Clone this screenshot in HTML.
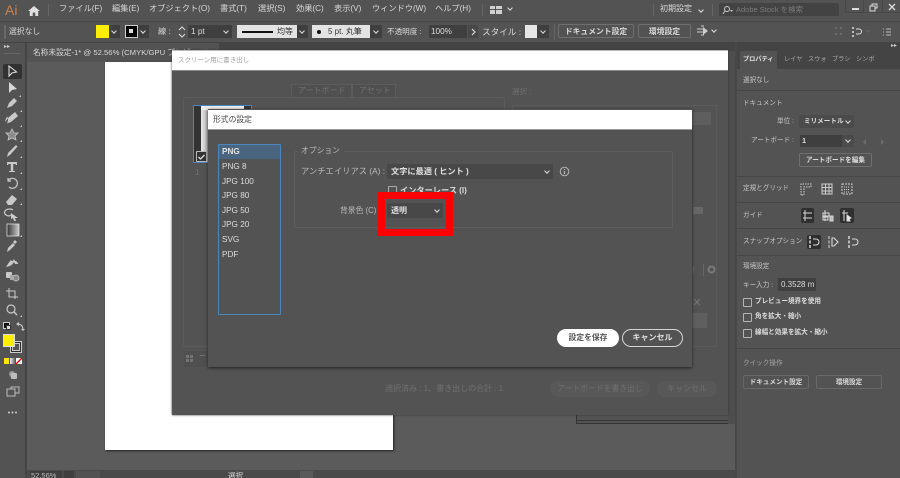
<!DOCTYPE html>
<html lang="ja"><head><meta charset="utf-8"><title>Illustrator</title>
<style>
html,body{margin:0;padding:0;background:#5a5a5a}
#p{position:relative;width:900px;height:478px;overflow:hidden;background:#5b5b5b;font-family:"Liberation Sans","Noto Sans CJK JP",sans-serif;font-size:8.2px;color:#d8d8d8;filter:blur(.35px)}
#p div{position:absolute;box-sizing:border-box}
.t{position:absolute;white-space:nowrap;line-height:12px}
.b{background:#3f3f3f}
.btn{border:1px solid #6e6e6e;border-radius:2px;text-align:center;font-weight:bold;color:#d8d8d8;line-height:13px;white-space:nowrap;overflow:hidden}
.c::after{content:"";position:absolute;right:4px;top:50%;width:3px;height:3px;margin-top:-3px;border-right:1.3px solid #ddd;border-bottom:1.3px solid #ddd;transform:rotate(45deg)}
svg{position:absolute;overflow:visible}
.dim{color:#707070}
.cb{width:9px;height:9px;border:1px solid #b5b5b5;border-radius:1px}
.sep{height:1px;background:#464646}
.r{font-size:6.6px;color:#c8c8c8}
.rb{font-size:6.6px;font-weight:bold;color:#dcdcdc}
.l{font-size:8.200px;color:#ddd}
</style></head><body><div id="p">

<!-- menu bar -->
<div style="left:0;top:0;width:900px;height:21px;background:#535353"></div>
<div class="t" style="left:5px;top:2px;font-size:14px;line-height:16px;color:#c9824f">Ai</div>
<svg style="left:28px;top:6px" width="12" height="10" viewBox="0 0 14 12"><path d="M7 0L0 6h2v6h3.500V8h3v4H12V6h2z" fill="#e0e0e0"/></svg>
<div style="left:48px;top:4px;width:1px;height:12px;background:#666"></div>
<div class="t" style="left:59px;top:3px;">ファイル(F)</div>
<div class="t" style="left:112px;top:3px">編集(E)</div>
<div class="t" style="left:149px;top:3px">オブジェクト(O)</div>
<div class="t" style="left:220px;top:3px">書式(T)</div>
<div class="t" style="left:258px;top:3px">選択(S)</div>
<div class="t" style="left:296px;top:3px">効果(C)</div>
<div class="t" style="left:334px;top:3px">表示(V)</div>
<div class="t" style="left:372px;top:3px">ウィンドウ(W)</div>
<div class="t" style="left:435px;top:3px">ヘルプ(H)</div>
<div style="left:482px;top:4px;width:1px;height:12px;background:#666"></div>
<div style="left:490px;top:6px;width:12px;height:8px;background:#d0d0d0"></div>
<div style="left:495px;top:6px;width:1px;height:8px;background:#535353"></div>
<div style="left:490px;top:9px;width:12px;height:1px;background:#535353"></div>
<div class="c" style="left:504px;top:3px;width:12px;height:12px"></div>
<div style="left:653px;top:4px;width:1px;height:12px;background:#666"></div>
<div class="t" style="left:660px;top:3px;font-size:8px">初期設定</div>
<div class="c" style="left:695px;top:5px;width:12px;height:12px"></div>
<div style="left:712px;top:4px;width:1px;height:12px;background:#666"></div>
<div style="left:719px;top:3px;width:120px;height:13px;background:#434343;border-radius:2px"></div>
<svg style="left:722px;top:5px" width="12" height="10"><circle cx="5" cy="4" r="2.500" fill="none" stroke="#ccc"/><path d="M3 6L1 9" stroke="#ccc" fill="none"/><path d="M8 5h3l-1.500 2z" fill="#ccc"/></svg>
<div class="t" style="left:736px;top:4px;font-size:7.500px;color:#7c7c7c">Adobe Stock を検索</div>
<div style="left:845px;top:0;width:55px;height:13px;border-left:1px solid #484848;border-bottom:1px solid #484848"></div>
<div style="left:863px;top:0;width:1px;height:13px;background:#484848"></div>
<div style="left:882px;top:0;width:1px;height:13px;background:#484848"></div>
<div style="left:852px;top:8px;width:7px;height:1.500px;background:#ddd"></div>
<svg style="left:869px;top:3px" width="10" height="10"><path d="M3 3V1h5v4H6M1 3h5v5H1z" fill="none" stroke="#ddd"/></svg>
<svg style="left:888px;top:3px" width="8" height="8"><path d="M1 1l6 6M7 1L1 7" stroke="#ddd" stroke-width="1.300"/></svg>

<!-- control bar -->
<div style="left:0;top:21px;width:900px;height:21px;background:#535353;border-top:1px solid #484848"></div>
<div style="left:4px;top:25px;width:2px;height:14px;background:#666"></div>
<div class="t" style="left:9px;top:26px;font-size:7.800px">選択なし</div>
<div class="b c" style="left:96px;top:25px;width:24px;height:13px"></div>
<div style="left:96px;top:25px;width:13px;height:13px;background:#ffee00"></div>
<div class="b c" style="left:125px;top:25px;width:24px;height:13px"></div>
<div style="left:125px;top:25px;width:13px;height:13px;background:#000;border:1px solid #ccc"></div>
<div style="left:129px;top:29px;width:4px;height:4px;background:#ddd"></div>
<div class="t" style="left:158px;top:26px">線 :</div>
<svg style="left:178px;top:26px" width="8" height="12"><path d="M1 4l3-3 3 3M1 8l3 3 3-3" fill="none" stroke="#ddd"/></svg>
<div class="b" style="left:188px;top:25px;width:32px;height:13px;padding-left:3px;line-height:13px;color:#ddd">1 pt</div>
<div class="b c" style="left:220px;top:25px;width:12px;height:13px"></div>
<div style="left:237px;top:25px;width:60px;height:13px;background:#e3e3e3"></div>
<div style="left:242px;top:31px;width:31px;height:1.500px;background:#111"></div>
<div class="t" style="left:277px;top:26px;color:#333;font-size:8px">均等</div>
<div class="b c" style="left:297px;top:25px;width:11px;height:13px"></div>
<div style="left:312px;top:25px;width:58px;height:13px;background:#e3e3e3"></div>
<div style="left:317px;top:30px;width:4px;height:4px;border-radius:50%;background:#111"></div>
<div class="t" style="left:328px;top:26px;color:#333;font-size:8px">5 pt. 丸筆</div>
<div class="b c" style="left:370px;top:25px;width:12px;height:13px"></div>
<div class="t" style="left:387px;top:26px;font-size:7.600px">不透明度 :</div>
<div class="b" style="left:429px;top:25px;width:38px;height:13px;padding-left:2px;line-height:13px;color:#ddd">100%</div>
<div style="left:468px;top:25px;width:10px;height:13px;background:#484848"></div>
<svg style="left:470px;top:28px" width="8" height="8"><path d="M2 1l3 3-3 3" fill="none" stroke="#ddd" stroke-width="1.200"/></svg>
<div class="t" style="left:482px;top:26px;font-size:8.600px">スタイル :</div>
<div style="left:525px;top:25px;width:12px;height:13px;background:#e6e6e6"></div>
<div class="b c" style="left:537px;top:25px;width:12px;height:13px"></div>
<div style="left:554px;top:24px;width:1px;height:16px;background:#666"></div>
<div class="btn" style="left:558px;top:24px;width:76px;height:14px;font-size:7.800px">ドキュメント設定</div>
<div class="btn" style="left:638px;top:24px;width:53px;height:14px;font-size:7.800px">環境設定</div>
<svg style="left:697px;top:25px" width="12" height="12"><path d="M0 4h6M0 7h6M4 1h3M4 10h3" stroke="#ccc"/><path d="M6 2l5 4-5 4z" fill="#ccc"/></svg>
<div class="c" style="left:708px;top:25px;width:12px;height:12px"></div>
<svg style="left:834px;top:26px" width="70" height="12"><path d="M1 1h2v2H1zM6 1h2v2H6zM1 7h2v2H1zM6 7h2v2H6z" fill="#6a6a6a"/><path d="M19 1v2M19 5v2M19 9v2" stroke="#ddd" stroke-width="1.500"/><path d="M22 3h3a2 2 0 0 1 0 5h-3" fill="none" stroke="#ddd"/><path d="M32 4l2 2 2-2" fill="none" stroke="#6a6a6a"/><path d="M49 3h1M49 6h1M49 9h1M52 3h5M52 6h5M52 9h5" stroke="#bbb"/></svg>

<!-- dark strip + tabs -->
<div style="left:0;top:42px;width:900px;height:9px;background:#444"></div>
<div style="left:26px;top:43px;width:193px;height:19px;background:#535353"></div>
<div class="t" style="left:33px;top:47px;font-size:7.700px">名称未設定-1* @ 52.56% (CMYK/GPU プレビュー)</div>

<!-- left toolbar -->
<div style="left:0;top:43px;width:27px;height:435px;background:#535353;border-right:2px solid #454545"></div>
<div class="t" style="left:4px;top:43px;font-size:6px;color:#ccc;line-height:8px">▸▸</div>
<div style="left:4px;top:53px;width:16px;height:1px;background:#777;opacity:.6"></div>
<div style="left:3px;top:64px;width:19px;height:15px;background:#323232;border-radius:2px"></div>
<svg style="left:0;top:0" width="26" height="478" fill="#c9c9c9" stroke="none">
<path transform="translate(12,71)" d="M-3-5v10l3-3 4.500-1z" fill="none" stroke="#dedede" stroke-width="1.100"/>
<path transform="translate(12,88)" d="M-3-6v11l3-3 5-1z" fill="#d8d8d8"/>
<path transform="translate(12,103)" d="M-5 5l2-5 5-5 3 3-5 5z"/>
<path transform="translate(12,119)" d="M-7 3c1-5 3-7 3-3s-2 5 0 4l3-1 7-6-3-4-6 5z"/>
<path transform="translate(12,135)" d="M0-6l2 4h4l-3 3 1 4-4-2-4 2 1-4-3-3h4z" fill="#8a8a8a" stroke="#c9c9c9" stroke-width=".8"/>
<path transform="translate(12,151)" d="M-5 6l1-4 8-8 1.500 1.500-7 8z"/>
<path transform="translate(12,167)" d="M-5-5H5v3H4l-.5-1H1.200v7H3v1H-3V4h1.800v-7H-3.500L-4-2H-5z"/>
<path transform="translate(12,183)" d="M-4-2a5 5 0 1 1 1 6M-4-5v3h3" fill="none" stroke="#c9c9c9" stroke-width="1.200"/>
<path transform="translate(12,198)" d="M-6 4l6-7 5 4-5 6h-4z"/>
<g transform="translate(12,214)"><path d="M1-4a5 3.500 0 1 0-4 6l2-1" fill="none" stroke="#c9c9c9" stroke-width="1.200"/><path d="M-1-1l7 5-3 0 1 3-2 0-1-3-2 1z"/></g>
<rect x="7" y="224" width="12" height="12" fill="url(#gr)" stroke="#ddd" stroke-width=".8"/>
<defs><linearGradient id="gr"><stop offset="0" stop-color="#333"/><stop offset="1" stop-color="#ccc"/></linearGradient></defs>
<g transform="translate(12,246)"><path d="M-5 6l1-4 5-5 2 2-5 5z"/><path d="M1-4l2-2 2 2-2 2z"/></g>
<path transform="translate(12,262)" d="M-6 5c2-3 3-5 5-7 1 2 2 1 3-1l1 2c2 0 3 2 3 3h-3l-1-2c-2 3-3 4-8 5z"/>
<g transform="translate(12,277)"><rect x="-6" y="-5" width="6" height="6" rx="1"/><circle cx="4" cy="1" r="3" fill="#8a8a8a" stroke="#ccc" stroke-width=".8"/><rect x="-2" y="-2" width="4" height="5" fill="#aaa"/></g>
<path transform="translate(12,294)" d="M-6-3h9v8M-3-6v9h9" fill="none" stroke="#c9c9c9"/>
<g transform="translate(12,310)"><circle cx="-1" cy="-1" r="4" fill="none" stroke="#c9c9c9" stroke-width="1.200"/><path d="M2 2l3 3" stroke="#c9c9c9" stroke-width="1.500"/></g>
<path d="M19 33h2v-2zM20 49h2v-2zM20 64h2v-2z" opacity="0"/>
<path d="M19 97h2v-2zM20 112h2v-2zM20 127h2v-2zM20 142h2v-2zM20 158h2v-2zM20 174h2v-2zM20 190h2v-2zM20 205h2v-2zM20 237h2v-2zM20 317h2v-2z"/>
</svg>
<div style="left:3px;top:322px;width:7px;height:7px;background:#111;border:1px solid #ccc"></div>
<div style="left:6px;top:325px;width:5px;height:5px;background:#ddd;border:1px solid #333"></div>
<svg style="left:16px;top:322px" width="9" height="9"><path d="M1 2c4 0 6 2 6 6" fill="none" stroke="#ccc"/><path d="M3 0v4L0 2zM5 7h4L7 9z" fill="#ccc"/></svg>
<div style="left:10px;top:341px;width:12px;height:12px;background:#2c2c2c;border:1px solid #ccc"></div>
<div style="left:12px;top:343px;width:8px;height:8px;background:#555;border:1px solid #ccc"></div>
<div style="left:3px;top:334px;width:12px;height:13px;background:#ffee00;border:1px solid #ddd"></div>
<div style="left:4px;top:358px;width:5px;height:6px;background:#ffe600"></div>
<div style="left:10px;top:358px;width:5px;height:6px;background:linear-gradient(90deg,#eee,#666)"></div>
<div style="left:16px;top:358px;width:6px;height:6px;background:#fff"></div>
<svg style="left:16px;top:358px" width="7" height="7"><path d="M0 6L6 0" stroke="#e00" stroke-width="1.300"/></svg>
<div style="left:9px;top:371px;width:6px;height:6px;background:#999;border-radius:50%"></div>
<div style="left:11px;top:373px;width:6px;height:6px;background:#bbb;border-radius:1px"></div>
<svg style="left:6px;top:386px" width="14" height="11"><path d="M1 3h8v7H1zM5 3V1h8v6H9" fill="none" stroke="#bbb"/></svg>
<svg style="left:8px;top:411px" width="10" height="3" fill="#ccc"><circle cx="1" cy="1.500" r="1"/><circle cx="4.500" cy="1.500" r="1"/><circle cx="8" cy="1.500" r="1"/></svg>

<!-- artboard -->
<div style="left:105px;top:62px;width:288px;height:388px;background:#fff;box-shadow:1px 1px 2px #222"></div>

<!-- status bar -->
<div style="left:27px;top:470px;width:709px;height:8px;background:#4a4a4a"></div>
<div class="b" style="left:30px;top:471px;width:32px;height:8px;font-size:7.500px;line-height:9px;padding-left:1px;color:#bbb">52.56%</div>
<div class="b" style="left:64px;top:471px;width:10px;height:8px"></div>
<div style="left:76px;top:471px;width:24px;height:8px;background:#525252"></div>
<div class="t" style="left:228px;top:472px;font-size:7.500px;line-height:8px">選択</div>
<div style="left:300px;top:471px;width:13px;height:8px;background:#5a5a5a"></div>

<!-- bits behind dialog at right -->
<div style="left:576px;top:414px;width:160px;height:10px;background:#535353;border-bottom:1px solid #333;border-left:1px solid #333"></div>
<div style="left:576px;top:420px;width:160px;height:1px;background:#333"></div>
<div style="left:728px;top:51px;width:8px;height:373px;background:#4e4e4e;border-right:1px solid #3a3a3a"></div>

<!-- right panel -->
<div style="left:735px;top:42px;width:165px;height:436px;background:#535353;border-left:2px solid #484848"></div>
<div style="left:737px;top:42px;width:163px;height:27px;background:#444"></div>
<div class="t" style="left:891px;top:42px;font-size:6px;color:#ccc;line-height:8px">▸▸</div>
<div style="left:740px;top:51px;width:37px;height:18px;background:#535353"></div>
<div class="t rb" style="left:743px;top:54px;font-size:6.200px;color:#e2e2e2">プロパティ</div>
<div class="t" style="left:784px;top:54px;font-size:6.200px;color:#aaa">レイヤ</div>
<div class="t" style="left:808px;top:54px;font-size:6.200px;color:#aaa">スウォ</div>
<div class="t" style="left:832px;top:54px;font-size:6.200px;color:#aaa">ブラシ</div>
<div class="t" style="left:856px;top:54px;font-size:6.200px;color:#aaa">シンボ</div>
<div class="t r" style="left:743px;top:75px">選択なし</div>
<div class="sep" style="left:737px;top:90px;width:163px"></div>
<div class="t r" style="left:743px;top:98px">ドキュメント</div>
<div class="t r" style="left:777px;top:116px">単位 :</div>
<div class="c rb" style="left:799px;top:115px;width:55px;height:13px;background:#4b4b4b;border-radius:2px;padding-left:5px;line-height:13px">ミリメートル</div>
<div class="t r" style="left:751px;top:135px">アートボード :</div>
<div class="b" style="left:800px;top:135px;width:42px;height:12px;padding-left:2px;line-height:12px;font-size:7.500px;font-weight:bold;color:#ddd">1</div>
<div class="c" style="left:842px;top:135px;width:12px;height:12px;background:#4b4b4b"></div>
<svg style="left:862px;top:138px" width="24" height="8"><path d="M4 1L1 4l3 3zM19 1l3 3-3 3z" fill="#6d6d6d"/></svg>
<div class="btn rb" style="left:799px;top:153px;width:73px;height:14px">アートボードを編集</div>
<div class="sep" style="left:737px;top:176px;width:163px"></div>
<div class="t r" style="left:743px;top:183px">定規とグリッド</div>
<svg style="left:800px;top:183px" width="64" height="13" fill="none" stroke="#cfcfcf"><path d="M1 12V1h10v3H4v8z" stroke-dasharray="1.500 1"/><rect x="22" y="1" width="10" height="10"/><path d="M25.500 1v10M29 1v10M22 4.500h10M22 8h10"/><rect x="42" y="1" width="10" height="10" stroke-dasharray="2 1"/><path d="M44 4h6M44 6.500h6M44 9h6" stroke-dasharray="1 1"/></svg>
<div class="sep" style="left:737px;top:202px;width:163px"></div>
<div class="t r" style="left:743px;top:210px">ガイド</div>
<div style="left:801px;top:208px;width:13px;height:15px;background:#2f2f2f;border-radius:2px"></div>
<div style="left:840px;top:208px;width:14px;height:15px;background:#2f2f2f;border-radius:2px"></div>
<svg style="left:800px;top:208px" width="56" height="15" fill="none" stroke="#d8d8d8"><path d="M5 2v11M3 5h9M3 10h9"/><path d="M25 2v11M23 5h6v3h-6zM23 9h5v3h-5z"/><path d="M30 8h3v5h-3z" fill="#bbb"/><path d="M44 2v11M42 5h6"/><path d="M47 7l4 3-2 1 1 2h-3z" fill="#eee"/></svg>
<div class="sep" style="left:737px;top:228px;width:163px"></div>
<div class="t r" style="left:743px;top:236px">スナップオプション</div>
<div style="left:807px;top:235px;width:14px;height:14px;background:#2f2f2f;border-radius:2px"></div>
<svg style="left:808px;top:235px" width="56" height="14" fill="none" stroke="#d8d8d8" stroke-width="1.100"><path d="M2 1v3M2 5.500v3M2 10v3" stroke-width="1.500"/><path d="M5 4h3a3 3 0 0 1 0 6H5"/><path d="M21 1v3M21 5.500v3M21 10v3" stroke-width="1.500" stroke="#aaa"/><path d="M24 3h2l4 4-4 4h-2z"/><path d="M41 1v3M41 5.500v3M41 10v3" stroke-width="1.500"/><path d="M44 4h3a3 3 0 0 1 0 6h-3"/></svg>
<div class="sep" style="left:737px;top:255px;width:163px"></div>
<div class="t r" style="left:743px;top:261px">環境設定</div>
<div class="t r" style="left:743px;top:280px">キー入力 :</div>
<div class="b" style="left:778px;top:278px;width:38px;height:13px;padding-left:3px;line-height:13px;font-size:8px;color:#ddd;overflow:hidden;white-space:nowrap">0.3528 m</div>
<div class="cb" style="left:743px;top:298px"></div>
<div class="t rb" style="left:755px;top:296px">プレビュー境界を使用</div>
<div class="cb" style="left:743px;top:313px"></div>
<div class="t rb" style="left:755px;top:311px">角を拡大・縮小</div>
<div class="cb" style="left:743px;top:329px"></div>
<div class="t rb" style="left:755px;top:327px">線幅と効果を拡大・縮小</div>
<div class="sep" style="left:737px;top:348px;width:163px"></div>
<div class="t r" style="left:743px;top:358px;color:#a8a8a8">クイック操作</div>
<div class="btn rb" style="left:743px;top:375px;width:66px;height:14px;border-color:#686868">ドキュメント設定</div>
<div class="btn rb" style="left:816px;top:375px;width:66px;height:14px;border-color:#686868">環境設定</div>

<!-- export dialog -->
<div style="left:172px;top:50px;width:556px;height:365px;background:#535353;box-shadow:0 0 2px #333"></div>
<div style="left:172px;top:51px;width:556px;height:20px;background:#fff;border-bottom:1px solid #888"></div>
<div style="left:172px;top:50px;width:556px;height:1px;background:#bbb"></div>
<div class="t" style="left:178px;top:55px;font-size:6.500px;color:#a0a0a0">スクリーン用に書き出し</div>
<div style="left:291px;top:84px;width:61px;height:14px;background:#505050;border:1px solid #5c5c5c;border-bottom:none"></div>
<div class="t dim" style="left:298px;top:85px;font-size:8px">アートボード</div>
<div style="left:352px;top:84px;width:44px;height:14px;background:#4f4f4f;border:1px solid #5c5c5c;border-bottom:none"></div>
<div class="t dim" style="left:359px;top:85px;font-size:8px">アセット</div>
<div style="left:183px;top:97px;width:322px;height:250px;border:1px solid #5b5b5b;border-radius:2px"></div>
<div style="left:193px;top:105px;width:59px;height:58px;background:#333;border:1px solid #4b86bf"></div>
<div style="left:201px;top:106px;width:43px;height:56px;background:linear-gradient(90deg,#e8e8e8,#999 25%,#777)"></div>
<div style="left:201px;top:106px;width:43px;height:4px;background:#eee"></div>
<div style="left:196px;top:151px;width:11px;height:11px;background:#333;border:1px solid #bbb;border-radius:1px"></div>
<svg style="left:197px;top:152px" width="10" height="10"><path d="M1.500 5l2 2 4-4" fill="none" stroke="#ddd" stroke-width="1.300"/></svg>
<div class="t dim" style="left:195px;top:167px;font-size:8px">1</div>
<div style="left:184px;top:351px;width:26px;height:16px;background:#4f4f4f"></div>
<svg style="left:185px;top:354px" width="24" height="10" fill="#747474"><rect x="1" y="1" width="3" height="3"/><rect x="5" y="1" width="3" height="3"/><rect x="1" y="5" width="3" height="3"/><rect x="5" y="5" width="3" height="3"/><rect x="15" y="1" width="5" height="1"/></svg>
<div class="t dim" style="left:512px;top:86px;font-size:7.500px">選択 :</div>
<div style="left:512px;top:105px;width:205px;height:242px;border:1px solid #5b5b5b"></div>
<div style="left:692px;top:112px;width:19px;height:13px;background:#5e5e5e"></div>
<div style="left:693px;top:207px;width:10px;height:7px;background:#676767"></div>
<div style="left:703px;top:264px;width:1px;height:12px;background:#666"></div>
<div style="left:693px;top:266px;width:1px;height:7px;background:#7a5f4a"></div>
<svg style="left:707px;top:265px" width="9" height="9"><circle cx="4.500" cy="4.500" r="3" fill="none" stroke="#7a7a7a" stroke-width="2"/></svg>
<svg style="left:693px;top:298px" width="8" height="8"><path d="M1 1l6 6M7 1L1 7" stroke="#777"/></svg>
<div style="left:692px;top:313px;width:15px;height:15px;background:#5f5f5f"></div>
<div class="t dim" style="left:385px;top:383px;font-size:8px">選択済み : 1、書き出しの合計 : 1</div>
<div style="left:550px;top:381px;width:100px;height:16px;border-radius:8px;background:#585858;color:#707070;text-align:center;line-height:16px;font-size:7.800px;white-space:nowrap">アートボードを書き出し</div>
<div style="left:657px;top:381px;width:60px;height:16px;border-radius:8px;background:#585858;color:#707070;text-align:center;line-height:16px;font-size:8px">キャンセル</div>

<!-- format dialog -->
<div style="left:208px;top:109px;width:484px;height:258px;background:#535353;box-shadow:0 1px 3px #222"></div>
<div style="left:208px;top:110px;width:484px;height:20px;background:#fff;border-bottom:1px solid #999"></div>
<div class="t" style="left:213px;top:114px;font-size:7.800px;color:#444">形式の設定</div>
<div style="left:218px;top:144px;width:63px;height:171px;border:1px solid #4b86bf;border-radius:1px"></div>
<div style="left:219px;top:145px;width:61px;height:14px;background:#4a6580"></div>
<div class="t l" style="left:222px;top:146px;color:#e4e4e4;font-weight:bold">PNG</div>
<div class="t l" style="left:222px;top:161px">PNG 8</div>
<div class="t l" style="left:222px;top:176px">JPG 100</div>
<div class="t l" style="left:222px;top:190px">JPG 80</div>
<div class="t l" style="left:222px;top:205px">JPG 50</div>
<div class="t l" style="left:222px;top:219px">JPG 20</div>
<div class="t l" style="left:222px;top:234px">SVG</div>
<div class="t l" style="left:222px;top:249px">PDF</div>
<div style="left:294px;top:151px;width:379px;height:77px;border:1px solid #5e5e5e;border-radius:2px"></div>
<div style="left:298px;top:145px;width:46px;height:12px;background:#535353"></div>
<div class="t" style="left:301px;top:145px;font-size:7.800px;color:#bcbcbc">オプション</div>
<div class="t" style="left:301px;top:165px;font-size:8.300px;color:#bcbcbc">アンチエイリアス (A) :</div>
<div class="c" style="left:387px;top:164px;width:166px;height:15px;background:#484848;border-radius:2px;padding-left:4px;line-height:15px;font-size:8.200px;font-weight:bold;color:#e0e0e0;white-space:nowrap">文字に最適 ( ヒント )</div>
<svg style="left:559px;top:166px" width="11" height="11"><circle cx="5.500" cy="5.500" r="4.300" fill="none" stroke="#b5b5b5"/><path d="M5.500 3v1M5.500 5v3" stroke="#b5b5b5" stroke-width="1.200"/></svg>
<div class="cb" style="left:388px;top:186px;border-color:#aaa"></div>
<div class="t" style="left:400px;top:185px;font-size:8.200px;font-weight:bold;color:#d8d8d8">インターレース (I)</div>
<div class="t" style="left:340px;top:205px;font-size:7.800px;color:#bcbcbc">背景色 (C)</div>
<div class="c" style="left:387px;top:203px;width:56px;height:15px;background:#484848;border-radius:2px;padding-left:4px;line-height:15px;font-size:8px;font-weight:bold;color:#e0e0e0">透明</div>
<div style="left:378px;top:192px;width:75px;height:44px;border:7px solid #ff0000"></div>
<div style="left:557px;top:329px;width:62px;height:18px;background:#fff;border-radius:9px;color:#555;text-align:center;line-height:18px;font-size:7.800px;font-weight:bold">設定を保存</div>
<div style="left:622px;top:329px;width:61px;height:18px;border:1px solid #d5d5d5;border-radius:9px;color:#e0e0e0;text-align:center;line-height:16px;font-size:8px;font-weight:bold">キャンセル</div>

</div></body></html>
